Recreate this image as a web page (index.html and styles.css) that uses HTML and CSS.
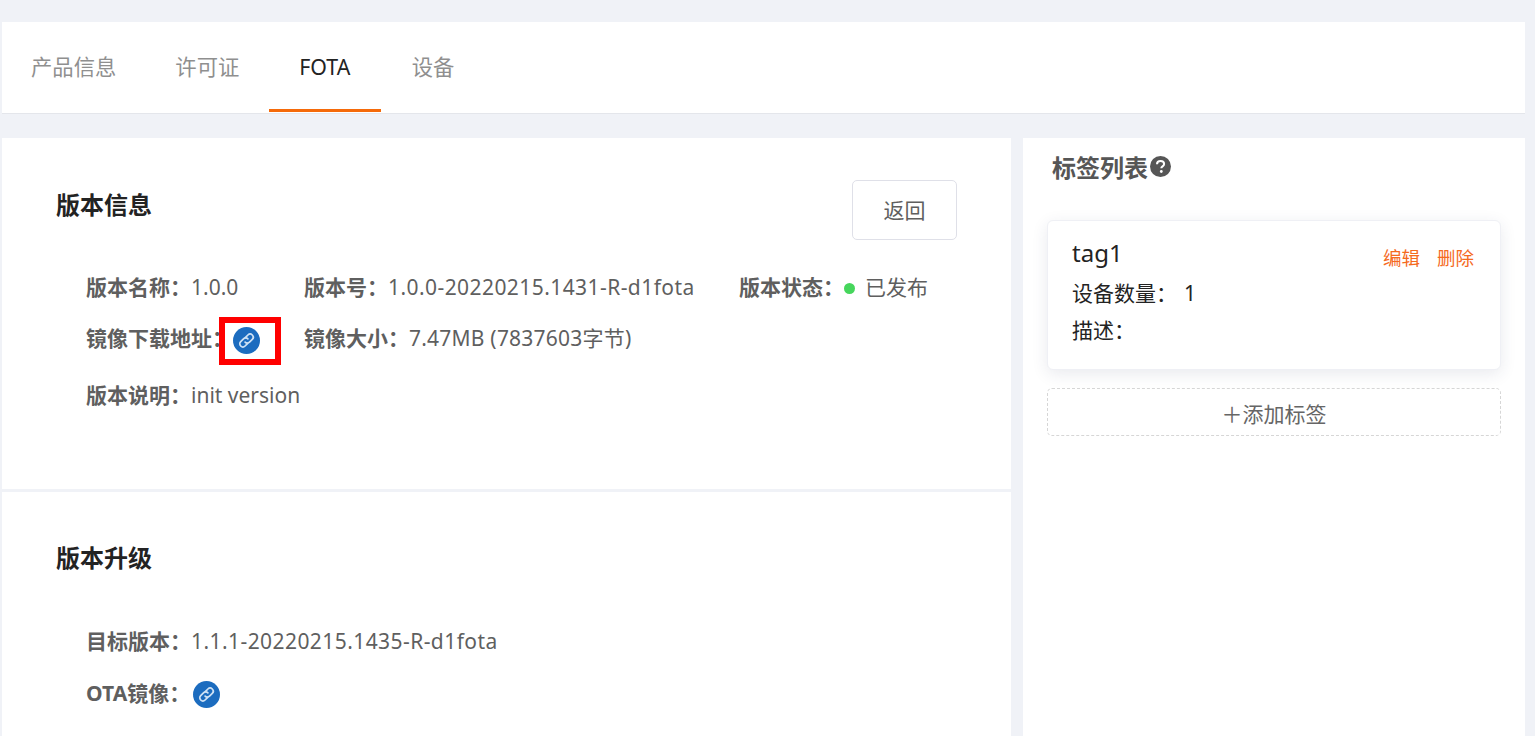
FILE: index.html
```html
<!DOCTYPE html>
<html lang="zh-CN">
<head>
<meta charset="utf-8">
<title>FOTA</title>
<link rel="stylesheet" href="styles.css">
</head>
<body>
<div class="page">
  <nav class="tabs">
    <a class="tab">产品信息</a>
    <a class="tab">许可证</a>
    <a class="tab active">FOTA</a>
    <a class="tab">设备</a>
  </nav>
  <div class="main">
    <div class="left">
      <section class="section first">
        <div class="head">
          <h2>版本信息</h2>
          <button class="back">返回</button>
        </div>
        <div class="row r1">
          <div class="f f1"><b>版本名称：</b>1.0.0</div>
          <div class="f f2"><b>版本号：</b><span class="ver">1.0.0-20220215.1431-R-d1fota</span></div>
          <div class="f"><b>版本状态：</b><i class="dot"></i>已发布</div>
        </div>
        <div class="row r2">
          <div class="f f1 mirror"><b>镜像下载地址：</b>
            <span class="boxed">
              <svg class="link" viewBox="0 0 27 27"><circle cx="13.5" cy="13.5" r="13.5" fill="#1c6cbf"/><g fill="none" stroke="#cfe2f5" stroke-width="1.7" stroke-linecap="round"><path d="M12.3 10.6l2.6-2.6a3.1 3.1 0 0 1 4.4 4.4l-2.8 2.8a3.1 3.1 0 0 1-4.4 0"/><path d="M14.7 16.4l-2.6 2.6a3.1 3.1 0 0 1-4.4-4.4l2.8-2.8a3.1 3.1 0 0 1 4.4 0"/></g></svg>
            </span>
          </div>
          <div class="f"><b>镜像大小：</b><span class="size">7.47MB (7837603字节)</span></div>
        </div>
        <div class="row r3">
          <div class="f"><b>版本说明：</b>init version</div>
        </div>
      </section>
      <section class="section second">
        <div class="head"><h2>版本升级</h2></div>
        <div class="row r1b">
          <div class="f"><b>目标版本：</b><span class="ver">1.1.1-20220215.1435-R-d1fota</span></div>
        </div>
        <div class="row r2b">
          <div class="f mirror"><b>OTA镜像：</b>
            <svg class="link ota" viewBox="0 0 27 27"><circle cx="13.5" cy="13.5" r="13.5" fill="#1c6cbf"/><g fill="none" stroke="#cfe2f5" stroke-width="1.7" stroke-linecap="round"><path d="M12.3 10.6l2.6-2.6a3.1 3.1 0 0 1 4.4 4.4l-2.8 2.8a3.1 3.1 0 0 1-4.4 0"/><path d="M14.7 16.4l-2.6 2.6a3.1 3.1 0 0 1-4.4-4.4l2.8-2.8a3.1 3.1 0 0 1 4.4 0"/></g></svg>
          </div>
        </div>
      </section>
    </div>
    <aside class="right">
      <h3>标签列表<svg class="help" viewBox="0 0 21 21"><circle cx="10.5" cy="10.5" r="10.5" fill="#565656"/><path d="M7 8.2c0-2 1.5-3.2 3.6-3.2 2 0 3.500 1.200 3.500 2.900 0 2.500-2.800 2.300-2.800 4.300" fill="none" stroke="#fff" stroke-width="2"/><circle cx="11.300" cy="15.500" r="1.400" fill="#fff"/></svg></h3>
      <div class="card">
        <div class="card-top">
          <div class="name">tag1</div>
          <div class="ops"><a>编辑</a><a>删除</a></div>
        </div>
        <div class="line count">设备数量：<span>1</span></div>
        <div class="line">描述：</div>
      </div>
      <div class="add">＋添加标签</div>
    </aside>
  </div>
</div>
</body>
</html>
```
FILE: styles.css
```css
* { box-sizing: border-box; }
html, body { margin: 0; height: 100%; overflow: hidden; }
body {
  background: #f0f2f7;
  font-family: "Noto Sans", "Noto Sans CJK SC", sans-serif;
  font-size: 21px;
  color: #5f5f5f;
}
.page { padding: 22px 10px 0 2px; display: flex; flex-direction: column; gap: 24px; height: 736px; }
.tabs {
  height: 92px;
  background: #fff;
  border-bottom: 1px solid #e4e6eb;
  display: flex;
  flex: none;
  font-size: 21.33px;
}
.tab {
  padding: 0 29.5px;
  height: 90px;
  line-height: 90px;
  color: #8f8f8f;
  border-bottom: 3px solid transparent;
}
.tab:first-child { padding-left: 29px; }
.tab:last-child { padding-left: 31px; }
.tab.active { color: #232323; border-bottom-color: #f56a0a; padding: 0 30.4px; }
.main { display: flex; gap: 12px; flex: 1; min-height: 0; }
.left { width: 1009px; background: #fff; flex: none; }
.right { flex: 1; background: #fff; padding: 0 24px; }
.section { padding: 0 54px; position: relative; }
.first { height: 354px; border-bottom: 3px solid #f0f2f7; }
.head { display: flex; justify-content: space-between; padding-top: 42px; }
.second .head { padding-top: 41px; }
h2 { margin: 1px 0 0; font-size: 24px; font-weight: 700; color: #232323; line-height: 48px; height: 48px; }
.back {
  width: 105px; height: 60px;
  background: #fff;
  border: 1px solid #dfe0e8;
  border-radius: 5px;
  font: inherit;
  color: #5f5f5f;
  padding: 0 0 2px;
}
.row { display: flex; padding-left: 30px; align-items: center; white-space: nowrap; }
.f { display: flex; align-items: center; line-height: 32px; }
.f b { color: #5f5f5f; font-weight: 700; }
.f1 { width: 218px; }
.f2 { width: 435px; }
.ver { letter-spacing: .43px; }
.size { letter-spacing: .22px; }
.r1 { margin-top: 31px; }
.r2 { margin-top: 19px; }
.r3 { margin-top: 25px; }
.r1b { margin-top: 43px; }
.r2b { margin-top: 20px; }
.dot { width: 11px; height: 11px; border-radius: 50%; background: #46d65c; margin: 2px 10px 0 0; }
.link { width: 27px; height: 27px; display: block; flex: none; margin-top: 2px; }
.boxed .link { margin-top: 4px; }
.ota { margin-left: 3px; }
.mirror b { white-space: nowrap; }
.boxed { position: relative; display: block; }
.boxed::after {
  content: "";
  box-sizing: border-box;
  position: absolute;
  left: -14px; top: -6px;
  width: 62px; height: 48px;
  border: 6px solid #f00;
}
h3 {
  margin: 0;
  font-size: 24px;
  font-weight: 700;
  color: #565656;
  display: flex;
  align-items: center;
  height: 56px;
  padding-left: 5px;
}
.help { width: 21px; height: 21px; margin-left: 2px; }
.card {
  margin-top: 26px;
  height: 150px;
  background: #fff;
  border: 1px solid #eff0f5;
  border-radius: 6px;
  padding: 16px 26px 0 24px;
  box-shadow: 0 4px 16px rgba(40, 50, 90, .1);
  color: #232323;
}
.card-top { display: flex; justify-content: space-between; }
.name { font-size: 24px; line-height: 32px; }
.ops { display: flex; gap: 17px; font-size: 18.5px; color: #f56a1e; padding-top: 7px; line-height: 28px; }
.line { line-height: 37px; }
.count { margin-top: 3px; }
.count span { margin-left: 7px; }
.add {
  margin-top: 18px;
  height: 48px;
  border: 1px dashed #d6d6d6;
  border-radius: 5px;
  text-align: center;
  line-height: 50px;
  color: #666;
}
```
